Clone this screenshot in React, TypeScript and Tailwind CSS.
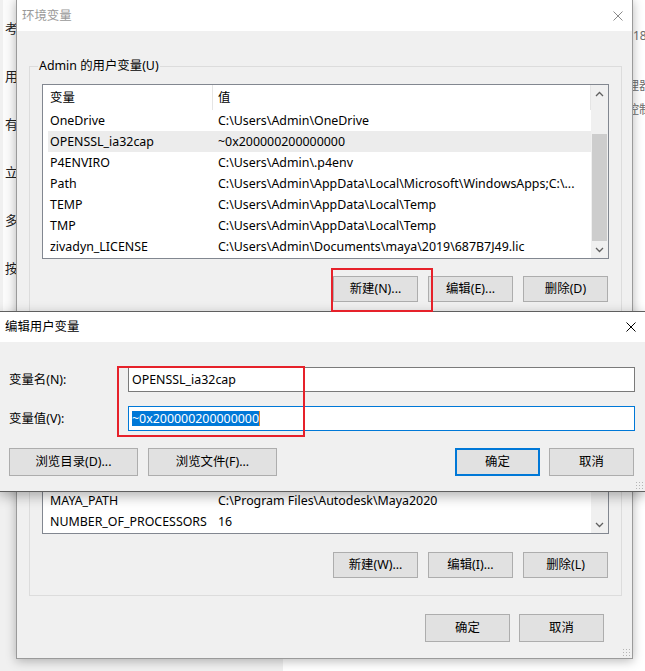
import React from "react";

const userVars: [string, string][] = [
  ["OneDrive", "C:\\Users\\Admin\\OneDrive"],
  ["OPENSSL_ia32cap", "~0x200000200000000"],
  ["P4ENVIRO", "C:\\Users\\Admin\\.p4env"],
  ["Path", "C:\\Users\\Admin\\AppData\\Local\\Microsoft\\WindowsApps;C:\\..."],
  ["TEMP", "C:\\Users\\Admin\\AppData\\Local\\Temp"],
  ["TMP", "C:\\Users\\Admin\\AppData\\Local\\Temp"],
  ["zivadyn_LICENSE", "C:\\Users\\Admin\\Documents\\maya\\2019\\687B7J49.lic"],
];

const systemVars: [string, string][] = [
  ["ComSpec", "C:\\Windows\\system32\\cmd.exe"],
  ["DriverData", "C:\\Windows\\System32\\Drivers\\DriverData"],
  ["MAYA_APP_DIR", "D:\\maya"],
  ["MAYA_LOCATION", "C:\\Program Files\\Autodesk\\Maya2020"],
  ["MAYA_MODULE_PATH", "C:\\Users\\Admin\\Documents\\maya\\modules"],
  ["MAYA_PATH", "C:\\Program Files\\Autodesk\\Maya2020"],
  ["NUMBER_OF_PROCESSORS", "16"],
];

const Chevron = ({ up }: { up?: boolean }) => (
  <svg width="9" height="6" viewBox="0 0 9 6">
    <polyline
      points={up ? "1,5 4.5,1.5 8,5" : "1,1 4.5,4.5 8,1"}
      fill="none"
      stroke="#606060"
      strokeWidth="1.3"
    />
  </svg>
);

const CloseX = ({ color }: { color: string }) => (
  <svg width="10" height="10" viewBox="0 0 10 10" className="mr-[9px]">
    <path d="M0.5 0.5 L9.5 9.5 M9.5 0.5 L0.5 9.5" stroke={color} strokeWidth="1" />
  </svg>
);

const Button = ({
  label,
  w = "w-[85px]",
  h = "h-[26px]",
  primary,
}: {
  label: string;
  w?: string;
  h?: string;
  primary?: boolean;
}) => (
  <div
    className={`${w} ${h} flex items-center justify-center bg-[#e1e1e1] text-[#000] ${
      primary ? "border-2 border-[#0078d7]" : "border border-[#adadad]"
    }`}
  >
    {label}
  </div>
);

const VarList = ({
  rows,
  selected,
  thumbTop,
  thumbH,
}: {
  rows: [string, string][];
  selected?: number;
  thumbTop: number;
  thumbH: number;
}) => (
  <div className="h-[175px] flex border border-[#828790] bg-white">
    <div className="flex-1 flex flex-col overflow-hidden">
      <div className="h-[25px] flex items-center shrink-0">
        <div className="w-[169px] pl-[7px]">变量</div>
        <div className="w-px h-full bg-[#e5e5e5]" />
        <div className="flex-1 pl-[5px]">值</div>
        <div className="w-px h-full bg-[#e5e5e5]" />
      </div>
      {rows.map(([name, value], i) => (
        <div
          key={i}
          className={`h-[21px] ml-[5px] flex items-center shrink-0 whitespace-nowrap ${
            i === selected ? "bg-[#ececec]" : ""
          }`}
        >
          <div className="w-[170px] pl-[2px] overflow-hidden">{name}</div>
          <div className="flex-1 overflow-hidden">{value}</div>
        </div>
      ))}
    </div>
    <div className="w-[17px] flex flex-col bg-[#f0f0f0]">
      <div className="h-[17px] flex items-center justify-center">
        <Chevron up />
      </div>
      <div style={{ height: thumbTop }} />
      <div className="mx-[1px] bg-[#cdcdcd]" style={{ height: thumbH }} />
      <div className="flex-1" />
      <div className="h-[17px] flex items-center justify-center">
        <Chevron />
      </div>
    </div>
  </div>
);

const Group = ({
  title,
  className = "",
  children,
}: {
  title: string;
  className?: string;
  children: React.ReactNode;
}) => (
  <fieldset className={`border border-[#dcdcdc] px-[12px] pb-[17px] ${className}`}>
    <legend className="-ml-[4px] px-[1px] leading-[16px]">{title}</legend>
    {children}
  </fieldset>
);

export default function App() {
  return (
    <div className="relative w-[645px] h-[671px] overflow-hidden bg-white text-[12.4px] leading-[16px] text-black font-['Noto_Sans','Noto_Sans_CJK_SC',sans-serif]">
      {/* window behind, left */}
      <div className="absolute left-0 top-0 w-[283px] h-[671px] bg-[#f0f0f0]">
        <div className="ml-[3px] h-[470px] bg-[#fbfbfb] pt-[20px] pl-[2px] flex flex-col gap-[32px] text-[13px] text-[#222]">
          <span>考</span>
          <span>用</span>
          <span>有</span>
          <span>立</span>
          <span>多</span>
          <span>按</span>
        </div>
      </div>
      {/* window behind, right */}
      <div className="absolute left-[627px] top-[28px] w-[40px] whitespace-nowrap text-[12px] text-[#6d6d6d]">
        <div className="pl-[6px]">18</div>
        <div className="mt-[34px]">理器</div>
        <div className="mt-[8px]">控制</div>
      </div>

      {/* 环境变量 dialog */}
      <div className="absolute left-[16px] top-[-1px] w-[617px] border border-[#9a9a9a] bg-[#f0f0f0] shadow-[0_2px_10px_rgba(0,0,0,0.28)] flex flex-col">
        <div className="h-[31px] bg-white flex items-center justify-between pl-[5px]">
          <span className="text-[#999]">环境变量</span>
          <CloseX color="#8a8a8a" />
        </div>
        <div className="flex flex-col pt-[27px] pl-[12px] pr-[10px] pb-[16px]">
          <Group title="Admin 的用户变量(U)">
            <div className="mt-[10px]">
              <VarList rows={userVars} selected={1} thumbTop={32} thumbH={107} />
            </div>
            <div className="mt-[17px] flex justify-end gap-[10px] pr-[1px]">
              <Button label="新建(N)..." />
              <Button label="编辑(E)..." />
              <Button label="删除(D)" />
            </div>
          </Group>
          <Group title="系统变量(S)" className="mt-[13px]">
            <div className="mt-[10px]">
              <VarList rows={systemVars} thumbTop={0} thumbH={60} />
            </div>
            <div className="mt-[18px] flex justify-end gap-[10px] pr-[1px]">
              <Button label="新建(W)..." />
              <Button label="编辑(I)..." />
              <Button label="删除(L)" />
            </div>
          </Group>
          <div className="mt-[18px] flex justify-end gap-[9px] pr-[18px]">
            <Button label="确定" h="h-[28px]" />
            <Button label="取消" h="h-[28px]" />
          </div>
        </div>
        <div className="absolute right-[2px] bottom-[2px] w-[8px] h-[8px] bg-[radial-gradient(#b5b5b5_1px,transparent_1px)] bg-[length:3px_3px]" />
      </div>

      {/* 编辑用户变量 dialog */}
      <div className="absolute left-[-1px] top-[311px] w-[647px] border border-[#5f5f5f] bg-[#f0f0f0] shadow-[0_4px_12px_rgba(0,0,0,0.3)] flex flex-col">
        <div className="h-[30px] bg-white flex items-center justify-between pl-[5px]">
          <span>编辑用户变量</span>
          <CloseX color="#000" />
        </div>
        <div className="flex flex-col pt-[25px] pl-[9px] pr-[10px] pb-[15px]">
          <div className="flex items-center">
            <div className="w-[119px]">变量名(N):</div>
            <div className="flex-1 h-[25px] bg-white border border-[#7a7a7a] flex items-center pl-[3px]">
              OPENSSL_ia32cap
            </div>
          </div>
          <div className="mt-[14px] flex items-center">
            <div className="w-[119px]">变量值(V):</div>
            <div className="flex-1 h-[25px] bg-white border border-[#0078d7] flex items-center pl-[3px]">
              <span className="bg-[#0078d7] text-white leading-[15px]">~0x200000200000000</span>
              <span className="w-px h-[15px] bg-[#f08a24]" />
            </div>
          </div>
          <div className="mt-[17px] flex items-center">
            <div className="flex gap-[10px]">
              <Button label="浏览目录(D)..." w="w-[129px]" h="h-[28px]" />
              <Button label="浏览文件(F)..." w="w-[129px]" h="h-[28px]" />
            </div>
            <div className="flex-1" />
            <div className="flex gap-[9px] pr-[1px]">
              <Button label="确定" h="h-[28px]" primary />
              <Button label="取消" h="h-[28px]" />
            </div>
          </div>
        </div>
        <div className="absolute right-[2px] bottom-[2px] w-[8px] h-[8px] bg-[radial-gradient(#b5b5b5_1px,transparent_1px)] bg-[length:3px_3px]" />
      </div>

      {/* red annotation boxes */}
      <div className="absolute left-[331px] top-[268px] w-[102px] h-[44px] border-2 border-[#e6212a]" />
      <div className="absolute left-[117px] top-[366px] w-[188px] h-[71px] border-2 border-[#e6212a]" />
    </div>
  );
}
